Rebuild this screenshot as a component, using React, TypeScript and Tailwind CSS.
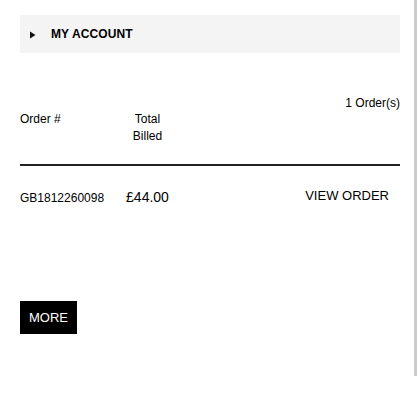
export default function App() {
  return (
    <div className="w-[420px] h-[420px] bg-white font-['Liberation_Sans',Arial,sans-serif] text-black">
      <div className="w-[417px] h-[376px] border-r-[3px] border-[#cbcbcb] pt-[15px] pl-[20px] pr-[14px]">
        {/* account toggle */}
        <div className="h-[38px] bg-[#f4f4f4] flex items-center pl-[10px]">
          <svg width="6" height="8" viewBox="0 0 6 8" className="mt-[1px]">
            <polygon points="0,0.5 5.5,4 0,7.5" fill="#111" />
          </svg>
          <span className="ml-[15px] text-[12px] font-bold leading-none tracking-[0.1px]">MY ACCOUNT</span>
        </div>

        {/* orders */}
        <div className="mt-[42px] text-right text-[12px] leading-[17px]">1 Order(s)</div>
        <div className="grid grid-cols-[106px_43px_1fr] text-[12px] leading-[17px] mt-[-1px]">
          <div>Order #</div>
          <div className="text-center whitespace-nowrap">
            Total
            <br />
            Billed
          </div>
          <div />
        </div>
        <div className="mt-[19px] h-[2px] bg-[#222]" />
        <div className="grid grid-cols-[106px_43px_1fr] items-baseline mt-[21px]">
          <div className="text-[12px]">GB1812260098</div>
          <div className="text-[14px] text-center">£44.00</div>
          <div className="text-[13px] text-right pr-[11px] -translate-y-[2px]">VIEW ORDER</div>
        </div>

        <button className="mt-[93px] w-[57px] h-[33px] bg-black text-white text-[13px] flex items-center justify-center">
          MORE
        </button>
      </div>
    </div>
  );
}
